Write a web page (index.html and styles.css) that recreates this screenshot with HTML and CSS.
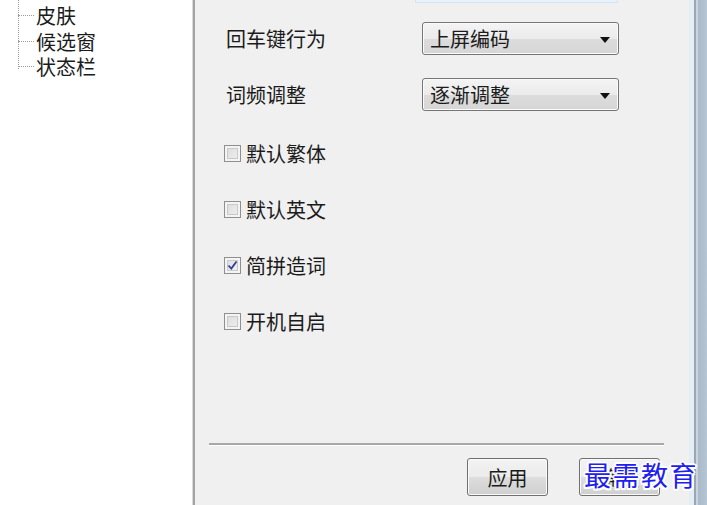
FILE: index.html
```html
<!DOCTYPE html>
<html lang="zh-CN">
<head>
<meta charset="utf-8">
<title>设置</title>
<link rel="stylesheet" href="styles.css">
</head>
<body>
<div class="window">
  <aside class="tree">
    <div class="tree-line"></div>
    <ul class="tree-list">
      <li class="tree-item"><span class="branch"></span>皮肤</li>
      <li class="tree-item"><span class="branch"></span>候选窗</li>
      <li class="tree-item"><span class="branch"></span>状态栏</li>
    </ul>
  </aside>
  <main class="panel">
    <div class="stub"></div>
    <div class="form-row first">
      <span class="label">回车键行为</span>
      <div class="select"><span>上屏编码</span><span class="arrow"></span></div>
    </div>
    <div class="form-row">
      <span class="label">词频调整</span>
      <div class="select"><span>逐渐调整</span><span class="arrow"></span></div>
    </div>
    <div class="checks">
      <label class="check"><span class="box"></span>默认繁体</label>
      <label class="check"><span class="box"></span>默认英文</label>
      <label class="check"><span class="box checked"><svg viewBox="0 0 11 11" width="11" height="11"><path d="M1.5 5.5 L4.3 8.5 L9.5 1.5" fill="none" stroke="#2c3f9c" stroke-width="1.8"/></svg></span>简拼造词</label>
      <label class="check"><span class="box"></span>开机自启</label>
    </div>
    <footer class="footer">
      <div class="sep"></div>
      <div class="buttons">
        <button class="btn">应用</button>
        <button class="btn">确定</button>
      </div>
    </footer>
  </main>
  <div class="frame">
    <span class="f1"></span><span class="f2"></span><span class="f3"></span><span class="f4"></span>
  </div>
  <div class="watermark">最需教育</div>
</div>
</body>
</html>
```
FILE: styles.css
```css
* { box-sizing: border-box; }
html, body { margin: 0; padding: 0; }
body {
  width: 707px;
  height: 505px;
  overflow: hidden;
  font-family: "Noto Sans CJK SC", "Microsoft YaHei", sans-serif;
  color: #1b1b1b;
  background: #f0f0f0;
}
.window {
  position: relative;
  display: flex;
  width: 707px;
  height: 505px;
}
.tree {
  position: relative;
  width: 195px;
  flex: none;
  background: #ffffff;
  border-right: 2px solid #a3a3a3;
  box-shadow: inset -1px 0 0 #d8d8d8;
}
.tree-line {
  position: absolute;
  left: 18px;
  top: 0;
  height: 69px;
  border-left: 1px dotted #9a9a9a;
}
.tree-list {
  list-style: none;
  margin: 0;
  padding: 3px 0 0 18px;
  font-size: 20px;
  line-height: 25.5px;
}
.tree-item {
  display: flex;
  align-items: center;
}
.branch {
  width: 16px;
  margin-right: 2px;
  border-top: 1px dotted #9a9a9a;
}
.panel {
  flex: 1;
  display: flex;
  flex-direction: column;
  padding-left: 31px;
}
.stub {
  width: 203px;
  height: 3px;
  margin-left: 189px;
  background: #e6f1fa;
  border: 1px solid #d4e4f2;
  border-top: none;
}
.form-row {
  display: flex;
  align-items: center;
  margin-top: 23px;
  font-size: 20px;
}
.form-row.first { margin-top: 19px; }
.label {
  width: 196px;
  flex: none;
}
.select {
  width: 197px;
  height: 33px;
  display: flex;
  align-items: center;
  justify-content: space-between;
  padding: 0 8px 0 7px;
  border: 1px solid #767676;
  border-radius: 3px;
  background: linear-gradient(#f4f4f4, #ebebeb 50%, #dcdcdc 51%, #d6d6d6);
  box-shadow: inset 0 0 0 1px #fbfbfb;
  font-size: 20px;
}
.arrow {
  width: 0;
  height: 0;
  margin-top: 2px;
  border-left: 5px solid transparent;
  border-right: 5px solid transparent;
  border-top: 6px solid #111;
}
.checks {
  display: flex;
  flex-direction: column;
  gap: 32px;
  margin-top: 30px;
  margin-left: -2px;
  font-size: 20px;
}
.check {
  display: flex;
  align-items: center;
  height: 24px;
}
.box {
  width: 17px;
  height: 17px;
  margin-right: 5px;
  border: 1px solid #8f8f8f;
  background: linear-gradient(135deg, #d9d9d9, #f2f2f2);
  box-shadow: inset 0 0 0 2px #f4f4f4, inset 0 0 0 3px #c9c9c9;
  display: flex;
  align-items: center;
  justify-content: center;
}
.box.checked {
  background: linear-gradient(135deg, #dcdcdc, #f4f4f4);
}
.footer {
  margin-top: auto;
  padding-bottom: 9px;
}
.sep {
  margin: 0 25px 0 -17px;
  background: #a8a8a8;
  border-bottom: 1px solid #ffffff;
  height: 3px;
}
.buttons {
  display: flex;
  justify-content: flex-end;
  gap: 31px;
  margin-top: 12px;
  padding-right: 29px;
}
.btn {
  width: 81px;
  height: 38px;
  font-family: inherit;
  font-size: 20px;
  color: #1b1b1b;
  border: 1px solid #707070;
  border-radius: 3px;
  background: linear-gradient(#f3f3f3, #ebebeb 50%, #dddddd 51%, #cfcfcf);
  box-shadow: inset 0 0 0 1px #fafafa;
  padding: 0;
}
.frame {
  width: 18px;
  flex: none;
  display: flex;
}
.f1 { width: 5px; background: #e4edf5; }
.f2 { width: 2px; background: #9aa6b1; }
.f3 { width: 2px; background: #c9d4de; }
.f4 { flex: 1; background: linear-gradient(90deg, #a9b9c8, #b7c6d4); }
.watermark {
  position: absolute;
  left: 584px;
  top: 456px;
  font-family: "Noto Sans CJK SC", serif;
  font-size: 27px;
  letter-spacing: 1.5px;
  color: #1d20f0;
  text-shadow: 2px 0 0 #fff, -2px 0 0 #fff, 0 2px 0 #fff, 0 -2px 0 #fff, 1.5px 1.5px 0 #fff, -1.5px -1.5px 0 #fff, 1.5px -1.5px 0 #fff, -1.5px 1.5px 0 #fff;
  line-height: 38px;
}
```
